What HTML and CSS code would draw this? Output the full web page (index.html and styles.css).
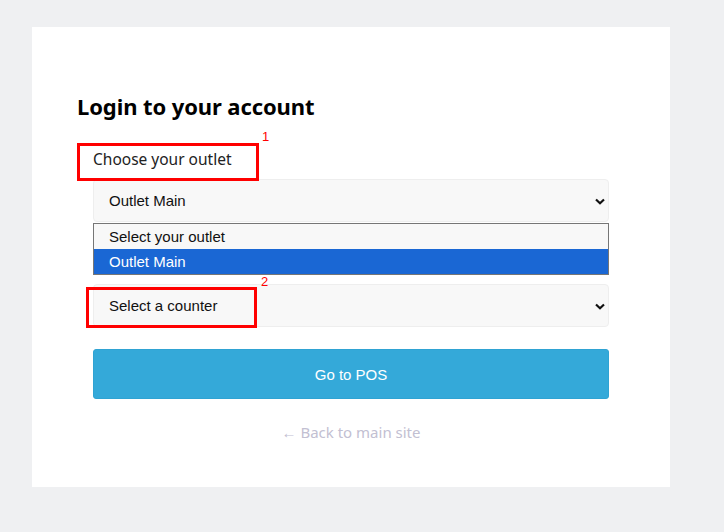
FILE: index.html
```html
<!DOCTYPE html>
<html>
<head>
<meta charset="utf-8">
<link rel="stylesheet" href="styles.css">
</head>
<body>
<div class="card">
  <h1 class="title">Login to your account</h1>
  <div class="form">
    <div class="group">
      <label class="label">Choose your outlet</label>
      <div class="select-wrap">
        <div class="select"><span>Outlet Main</span><svg class="chev" width="10" height="7" viewBox="0 0 10 7"><path d="M1 1.5 L5 5.2 L9 1.5" fill="none" stroke="#111" stroke-width="2.2"/></svg></div>
        <ul class="dropdown">
          <li class="opt">Select your outlet</li>
          <li class="opt active">Outlet Main</li>
        </ul>
      </div>
      <span class="mark mark1"></span>
      <span class="num num1">1</span>
    </div>
    <div class="group group2">
      <div class="select"><span>Select a counter</span><svg class="chev" width="10" height="7" viewBox="0 0 10 7"><path d="M1 1.5 L5 5.2 L9 1.5" fill="none" stroke="#111" stroke-width="2.2"/></svg></div>
      <span class="mark mark2"></span>
      <span class="num num2">2</span>
    </div>
    <button class="btn">Go to POS</button>
    <a class="back" href="#">← Back to main site</a>
  </div>
</div>
</body>
</html>
```
FILE: styles.css
```css
* { box-sizing: border-box; }
html, body { margin: 0; }
body {
  background: #eff0f2;
  padding: 27px 0 0 32px;
  font-family: "Noto Sans", "Liberation Sans", sans-serif;
  width: 724px;
  height: 532px;
  overflow: hidden;
}
.card {
  width: 638px;
  height: 460px;
  background: #fff;
  padding: 64px 60px 0 45px;
}
.title {
  margin: 0;
  font-size: 22px;
  line-height: 30px;
  font-weight: 700;
  color: #000;
  letter-spacing: -0.1px;
}
.form {
  padding-left: 16px;
  margin-top: 22px;
  width: 532px;
}
.group { position: relative; }
.label {
  display: block;
  font-size: 15.5px;
  line-height: 33px;
  padding-bottom: 3px;
  color: #222;
}
.select-wrap { position: relative; }
.select {
  height: 43px;
  background: #f8f8f8;
  border: 1px solid #eeeeee;
  border-radius: 4px;
  display: flex;
  align-items: center;
  justify-content: space-between;
  padding: 0 3px 0 15px;
  font-family: "Liberation Sans", Arial, sans-serif;
  font-size: 15px;
  color: #111;
}
.chev { margin-top: 1px; }
.dropdown {
  position: absolute;
  left: 0;
  right: 0;
  top: 44px;
  margin: 0;
  padding: 0;
  list-style: none;
  border: 1px solid #767676;
  background: #f8f8f8;
  font-family: "Liberation Sans", Arial, sans-serif;
  font-size: 15px;
  z-index: 2;
}
.opt {
  height: 25px;
  line-height: 25px;
  padding-left: 15px;
  color: #111;
}
.opt.active { background: #1a67d4; color: #fff; }
.mark {
  position: absolute;
  border: 3px solid #ff0000;
  z-index: 3;
}
.mark1 { left: -16px; top: 0; width: 182px; height: 38px; }
.mark2 { left: -7px; top: 3px; width: 171px; height: 41px; }
.num {
  position: absolute;
  color: #ff0000;
  font-family: "Liberation Sans", Arial, sans-serif;
  font-size: 13px;
  line-height: 13px;
  z-index: 3;
}
.num1 { left: 169px; top: -13px; }
.num2 { left: 168px; top: -9px; }
.group2 { margin-top: 62px; }
.btn {
  display: block;
  width: 100%;
  height: 50px;
  margin-top: 22px;
  background: #34a9d9;
  border: 1px solid #2fa3d3;
  border-radius: 3px;
  color: #fff;
  font-family: "Liberation Sans", Arial, sans-serif;
  font-size: 15px;
}
.back {
  display: block;
  text-align: center;
  margin-top: 23px;
  color: #c2c0d2;
  text-decoration: none;
  font-size: 15px;
}
```
